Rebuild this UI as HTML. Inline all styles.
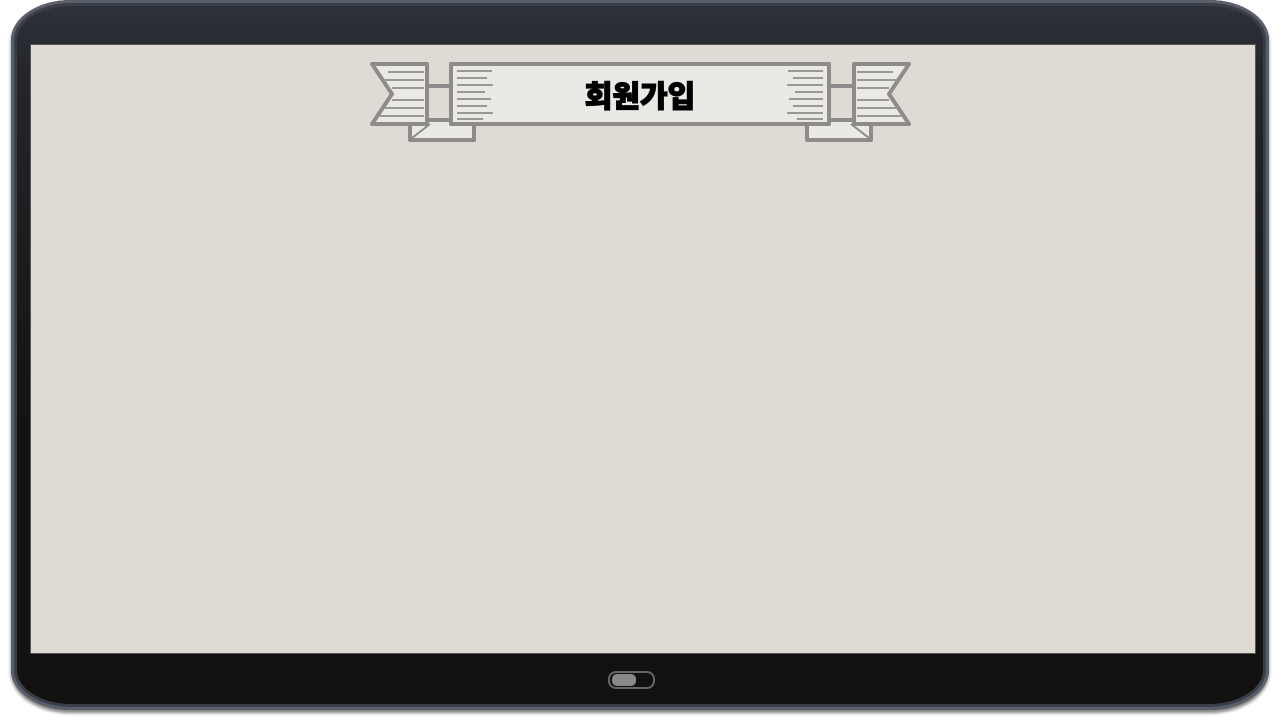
<!DOCTYPE html>
<html><head><meta charset="utf-8"><style>
html,body{margin:0;padding:0;width:1280px;height:720px;overflow:hidden;background:#fff}
.frame{position:absolute;left:11px;top:0;width:1258px;height:710px;border-radius:60px/40px;background:linear-gradient(#2f333b 0%,#24262b 10%,#141312 60%,#121110 100%);box-shadow:inset 0 0 0 3px #5a606b,inset 0 0 0 6px #3a3e46, 0 3px 3px rgba(0,0,0,.5)}
.screen{position:absolute;left:30px;top:44px;width:1224px;height:608px;background:#dfdad4;border:1px solid #555}
</style></head><body>
<div class="frame"></div>
<div class="screen"></div>
<svg width="1280" height="720" style="position:absolute;left:0;top:0">
<g stroke="#8e8c8a" stroke-width="4" stroke-linejoin="round" fill="#ebe9e6">
<g id="L">
<polygon points="410,120 410,140 474,140 474,120"/>
<line x1="412" y1="138" x2="430" y2="124" stroke-width="2"/>
<polygon points="372,64 427,64 427,124 372,124 392,94"/>
<line x1="427" y1="86" x2="451" y2="86"/>
</g>
<use href="#L" transform="translate(1281,0) scale(-1,1)"/>
<rect x="451" y="64" width="378" height="60"/>
</g>
<g stroke="#9a9896" stroke-width="2">
<path d="M457 71h35M457 78h30M457 85h36M457 92h28M457 99h34M457 106h30M457 113h36M457 119h26M388 72h36M384 80h40M392 88h32M392 100h32M384 108h40M380 116h44"/>
<path d="M823 71h-35M823 78h-30M823 85h-36M823 92h-28M823 99h-34M823 106h-30M823 113h-36M823 119h-26M893 72h-36M897 80h-40M889 88h-32M889 100h-32M897 108h-40M901 116h-44"/>
</g>
<text x="640" y="107" text-anchor="middle" font-family="'Liberation Sans','Noto Sans CJK KR',sans-serif" font-weight="900" font-size="30" fill="#000" stroke="#000" stroke-width="1.2">회원가입</text>
<rect x="609" y="672" width="45" height="16" rx="7" fill="none" stroke="#666" stroke-width="2"/>
<rect x="612" y="674" width="24" height="12" rx="5" fill="#888"/>
</svg>
</body></html>
